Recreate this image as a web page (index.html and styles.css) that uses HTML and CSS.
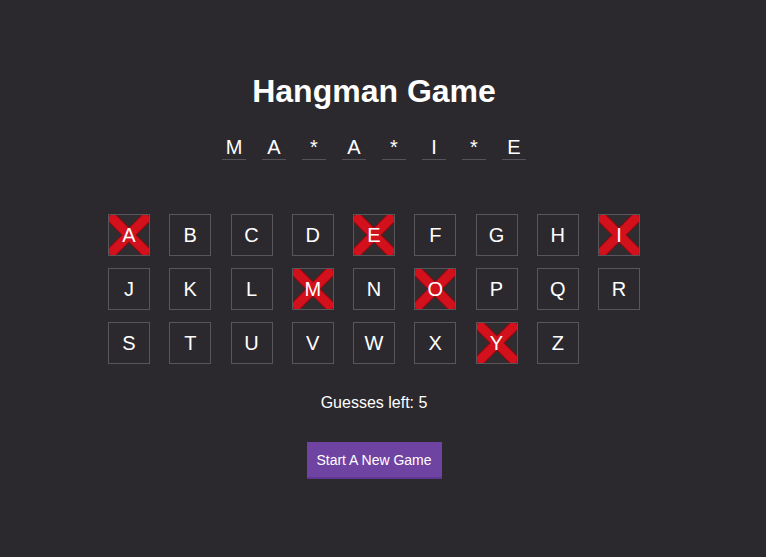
FILE: index.html
```html
<!DOCTYPE html>
<html>
<head>
<meta charset="utf-8">
<link rel="stylesheet" href="styles.css">
</head>
<body>
<main class="app">
  <h1 class="title">Hangman Game</h1>
  <div class="word">
    <span class="slot">M</span><span class="slot">A</span><span class="slot">*</span><span class="slot">A</span><span class="slot">*</span><span class="slot">I</span><span class="slot">*</span><span class="slot">E</span>
  </div>
  <div class="keys">
    <button class="key used"><svg class="cross" viewBox="0 0 40 40"><path class="edge" d="M4 4L36 36M36 4L4 36"/><path class="fill" d="M4 4L36 36M36 4L4 36"/></svg><span>A</span></button>
    <button class="key"><span>B</span></button>
    <button class="key"><span>C</span></button>
    <button class="key"><span>D</span></button>
    <button class="key used"><svg class="cross" viewBox="0 0 40 40"><path class="edge" d="M4 4L36 36M36 4L4 36"/><path class="fill" d="M4 4L36 36M36 4L4 36"/></svg><span>E</span></button>
    <button class="key"><span>F</span></button>
    <button class="key"><span>G</span></button>
    <button class="key"><span>H</span></button>
    <button class="key used"><svg class="cross" viewBox="0 0 40 40"><path class="edge" d="M4 4L36 36M36 4L4 36"/><path class="fill" d="M4 4L36 36M36 4L4 36"/></svg><span>I</span></button>
    <button class="key"><span>J</span></button>
    <button class="key"><span>K</span></button>
    <button class="key"><span>L</span></button>
    <button class="key used"><svg class="cross" viewBox="0 0 40 40"><path class="edge" d="M4 4L36 36M36 4L4 36"/><path class="fill" d="M4 4L36 36M36 4L4 36"/></svg><span>M</span></button>
    <button class="key"><span>N</span></button>
    <button class="key used"><svg class="cross" viewBox="0 0 40 40"><path class="edge" d="M4 4L36 36M36 4L4 36"/><path class="fill" d="M4 4L36 36M36 4L4 36"/></svg><span>O</span></button>
    <button class="key"><span>P</span></button>
    <button class="key"><span>Q</span></button>
    <button class="key"><span>R</span></button>
    <button class="key"><span>S</span></button>
    <button class="key"><span>T</span></button>
    <button class="key"><span>U</span></button>
    <button class="key"><span>V</span></button>
    <button class="key"><span>W</span></button>
    <button class="key"><span>X</span></button>
    <button class="key used"><svg class="cross" viewBox="0 0 40 40"><path class="edge" d="M4 4L36 36M36 4L4 36"/><path class="fill" d="M4 4L36 36M36 4L4 36"/></svg><span>Y</span></button>
    <button class="key"><span>Z</span></button>
  </div>
  <p class="status">Guesses left: 5</p>
  <button class="restart">Start A New Game</button>
</main>
</body>
</html>
```

FILE: styles.css
```css
html, body {
  margin: 0;
  padding: 0;
  background: #2b292e;
  height: 100%;
}
body {
  font-family: "Liberation Sans", Arial, sans-serif;
  color: #ffffff;
}
.app {
  width: 748px;
  display: flex;
  flex-direction: column;
  align-items: center;
  padding-top: 73px;
}
.title {
  margin: 0;
  font-size: 32px;
  font-weight: bold;
  line-height: 37px;
}
.word {
  display: flex;
  gap: 16px;
  margin-top: 26px;
}
.slot {
  width: 24px;
  text-align: center;
  font-size: 20px;
  line-height: 23px;
  border-bottom: 1px solid #56545a;
}
.keys {
  display: grid;
  grid-template-columns: repeat(9, 42px);
  column-gap: 19.25px;
  row-gap: 12px;
  margin-top: 54px;
}
.key {
  position: relative;
  width: 42px;
  height: 42px;
  padding: 0;
  margin: 0;
  border: 1px solid #58565b;
  background: #2b292e;
  color: #ffffff;
  font-family: "Liberation Sans", Arial, sans-serif;
  font-size: 20px;
  display: flex;
  align-items: center;
  justify-content: center;
}
.key span {
  position: relative;
}
.cross {
  position: absolute;
  left: 0;
  top: 0;
  width: 40px;
  height: 40px;
}
.cross path {
  fill: none;
  stroke-linecap: square;
}
.cross .edge {
  stroke: #8e0a12;
  stroke-width: 11;
}
.cross .fill {
  stroke: #d3111c;
  stroke-width: 9;
}
.used {
  background: #2f2d2f;
}
.status {
  margin: 30px 0 0 0;
  font-size: 16px;
  line-height: 18px;
}
.restart {
  margin-top: 30px;
  width: 135px;
  height: 37px;
  border: none;
  border-bottom: 2px solid #5f3691;
  background: #6f43a1;
  color: #ffffff;
  font-family: "Liberation Sans", Arial, sans-serif;
  font-size: 14px;
  padding: 0;
}
```
